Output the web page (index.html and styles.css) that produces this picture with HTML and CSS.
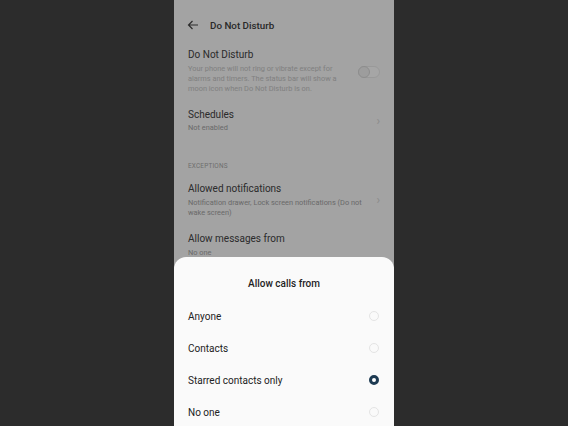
FILE: index.html
```html
<!DOCTYPE html>
<html lang="en">
<head>
<meta charset="utf-8">
<title>Do Not Disturb</title>
<link rel="stylesheet" href="styles.css">
</head>
<body>
<div class="phone">
    <div class="screen">
        <div class="toolbar">
            <svg class="back" viewBox="0 0 12 10" width="12" height="10">
                <path d="M11 5H1.5M5.5 1L1.5 5l4 4" fill="none" stroke="#444" stroke-width="1.2"/>
            </svg>
            <span class="toolbar_title">Do Not Disturb</span>
        </div>

        <div class="item item_dnd">
            <div class="item_text">
                <div class="item_title">Do Not Disturb</div>
                <div class="item_sub">Your phone will not ring or vibrate except for alarms and timers. The status bar will show a moon icon when Do Not Disturb is on.</div>
            </div>
            <div class="toggle"><span class="knob"></span></div>
        </div>

        <div class="item item_sched">
            <div class="item_text">
                <div class="item_title">Schedules</div>
                <div class="item_sub">Not enabled</div>
            </div>
            <span class="chev">›</span>
        </div>

        <div class="section">EXCEPTIONS</div>

        <div class="item item_allowed">
            <div class="item_text">
                <div class="item_title">Allowed notifications</div>
                <div class="item_sub">Notification drawer, Lock screen notifications (Do not wake screen)</div>
            </div>
            <span class="chev">›</span>
        </div>

        <div class="item">
            <div class="item_text">
                <div class="item_title">Allow messages from</div>
                <div class="item_sub">No one</div>
            </div>
        </div>
    </div>

    <div class="scrim"></div>

    <div class="sheet">
        <div class="sheet_title">Allow calls from</div>
        <ul class="options">
            <li class="option">Anyone<span class="radio"></span></li>
            <li class="option">Contacts<span class="radio"></span></li>
            <li class="option">Starred contacts only<span class="radio radio_on"></span></li>
            <li class="option">No one<span class="radio"></span></li>
        </ul>
    </div>
</div>
</body>
</html>
```

FILE: styles.css
```css
*{margin:0;padding:0;list-style:none;box-sizing:border-box;}
html,body{height:100%;}
body{background-color:#2c2c2c;font-family:Roboto,"Noto Sans",sans-serif;overflow:hidden;}

.phone{
    position:relative;
    width:220px;
    height:426px;
    margin-left:174px;
    background-color:#fafafa;
    overflow:hidden;
}
.screen{padding:0 14px;}

.toolbar{
    display:flex;
    align-items:center;
    height:48px;
    padding-top:2px;
}
.back{margin-left:-1px;margin-right:11px;}
.toolbar_title{font-size:9.8px;font-weight:500;color:#404040;}

.item{display:flex;align-items:center;gap:8px;}
.item_text{flex:1;}
.item_title{font-size:10px;color:#444;line-height:14px;}
.item_sub{font-size:7.4px;color:#a4a4a4;line-height:10px;margin-top:2px;}

.item_dnd .item_sub{color:#c6c6c6;}
.item_sched{margin-top:14px;}
.item_sched .item_sub{margin-top:1px;}
.item_allowed{margin-bottom:14px;}

.toggle{
    flex-shrink:0;
    align-self:flex-start;
    margin-top:18px;
    width:22px;
    height:12px;
    border-radius:6px;
    border:1px solid #ececec;
    background-color:#fff;
    position:relative;
}
.knob{
    position:absolute;
    left:-1px;top:-1px;
    width:12px;height:12px;
    border-radius:50%;
    border:1px solid #d8d8d8;
    background-color:#f2f2f2;
}
.chev{flex-shrink:0;color:#d6d6d6;font-size:12px;}

.section{
    font-size:6.4px;
    line-height:10px;
    color:#aaa;
    margin:28px 0 11px;
    letter-spacing:.2px;
}

/* dim layer behind the dialog */
.scrim{
    position:absolute;
    left:0;top:0;right:0;bottom:0;
    background-color:rgba(0,0,0,.35);
}

.sheet{
    position:absolute;
    left:0;right:0;bottom:0;
    top:257px;
    background-color:#fafafa;
    border-radius:12px 12px 0 0;
    padding:0 14px;
}
.sheet_title{
    text-align:center;
    font-size:10px;
    font-weight:500;
    color:#1e1e1e;
    height:54px;
    line-height:54px;
}
.options{margin-top:-11px;}
.option{
    display:flex;
    justify-content:space-between;
    align-items:center;
    height:32px;
    font-size:10px;
    color:#222;
}
.radio{
    width:10px;height:10px;
    border-radius:50%;
    border:1px solid #e4e4e4;
    margin-right:1px;
}
.radio_on{
    border:3px solid #1d3a52;
    background-color:#fff;
}
```
